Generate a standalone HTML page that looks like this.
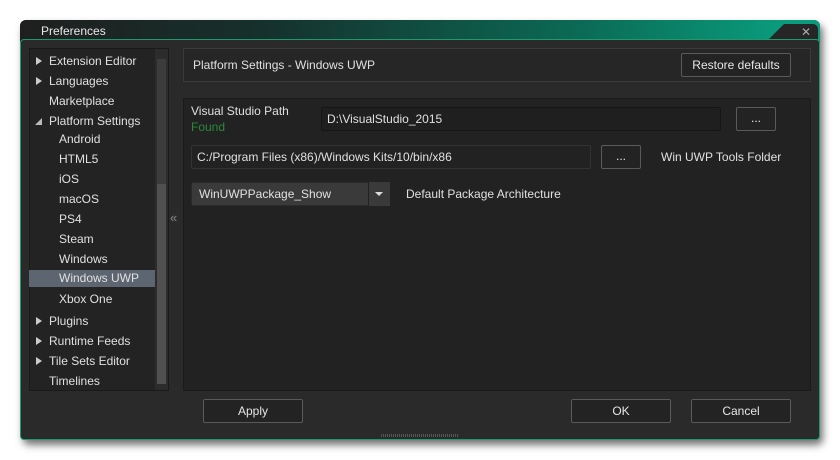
<!DOCTYPE html>
<html><head><style>
body{margin:0;width:840px;height:460px;background:#fff;position:relative;overflow:hidden;font-family:"Liberation Sans","DejaVu Sans",sans-serif;font-size:12px;color:#e0e0e0}
.abs{position:absolute;box-sizing:border-box}
.win{left:20px;top:20px;width:800px;height:420px;background:#2a2a2a;border-radius:6px;box-shadow:3px 5px 8px rgba(0,0,0,.55)}
.title{left:20px;top:20px;width:800px;height:21px;border-radius:6px 6px 0 0;background:linear-gradient(90deg,#1f1f1f 0%,#16302c 30%,#0b6a55 70%,#0a9b7c 95%)}
.body{left:20px;top:39px;width:800px;height:401px;border:1px solid #1f9a6a;border-radius:4px;background:#2a2a2a}
.panel{background:#232323;border:1px solid #1a1a1a}
.btn{border:1px solid #5a5a5a;border-radius:2px;background:#232323;text-align:center;color:#e6e6e6}
.field{background:#1f1f1f;border:1px solid #161616;border-radius:2px;padding-left:5px}
.row{position:absolute;left:0;height:20px;line-height:20px;color:#e0e0e0;font-size:12px}
.tri{position:absolute;left:7px;top:6px;width:0;height:0;border-left:6px solid #ccc;border-top:4px solid transparent;border-bottom:4px solid transparent}
</style></head><body>
<div class="abs win"></div>
<div class="abs title"></div>
<div class="abs" style="left:768px;top:24px;width:0;height:0;border-bottom:16px solid #262626;border-left:16px solid transparent"></div>
<div class="abs" style="left:784px;top:24px;width:34px;height:16px;background:#262626;border-radius:0 5px 0 0"></div>
<div class="abs" style="left:41px;top:24px;color:#e8e8e8;font-size:12px">Preferences</div>
<div class="abs" style="left:801px;top:25px;color:#aaa;font-size:12px">✕</div>
<div class="abs body"></div>

<div class="abs panel" style="left:29px;top:48px;width:140px;height:343px"></div>
<div class="abs" style="left:155px;top:49px;width:13px;height:341px;background:#2c2c2c"></div>
<div class="abs" style="left:157px;top:59px;width:9px;height:325px;background:#505050"></div>
<div class="abs" style="left:157px;top:59px;width:9px;height:125px;background:#3c3c3c"></div>
<div class="abs" style="left:29px;top:49px;width:126px;height:342px">
<div class="row" style="top:2px"><span class="tri"></span><span style="margin-left:20px">Extension Editor</span></div>
<div class="row" style="top:22px"><span class="tri"></span><span style="margin-left:20px">Languages</span></div>
<div class="row" style="top:42px"><span style="margin-left:20px">Marketplace</span></div>
<div class="row" style="top:62px"><span style="position:absolute;left:6px;top:7px;width:0;height:0;border-right:7px solid #bbb;border-top:7px solid transparent"></span><span style="margin-left:20px">Platform Settings</span></div>
<div class="row" style="top:80px"><span style="margin-left:30px">Android</span></div>
<div class="row" style="top:100px"><span style="margin-left:30px">HTML5</span></div>
<div class="row" style="top:120px"><span style="margin-left:30px">iOS</span></div>
<div class="row" style="top:140px"><span style="margin-left:30px">macOS</span></div>
<div class="row" style="top:160px"><span style="margin-left:30px">PS4</span></div>
<div class="row" style="top:180px"><span style="margin-left:30px">Steam</span></div>
<div class="row" style="top:200px"><span style="margin-left:30px">Windows</span></div>
<div class="row" style="top:221px;width:126px;height:17px;line-height:17px;background:#5d6670"><span style="margin-left:30px">Windows UWP</span></div>
<div class="row" style="top:240px"><span style="margin-left:30px">Xbox One</span></div>
<div class="row" style="top:262px"><span class="tri"></span><span style="margin-left:20px">Plugins</span></div>
<div class="row" style="top:282px"><span class="tri"></span><span style="margin-left:20px">Runtime Feeds</span></div>
<div class="row" style="top:302px"><span class="tri"></span><span style="margin-left:20px">Tile Sets Editor</span></div>
<div class="row" style="top:322px"><span style="margin-left:20px">Timelines</span></div>
</div>
<div class="abs" style="left:170px;top:210px;color:#888;font-size:13px">«</div>

<div class="abs panel" style="left:183px;top:48px;width:628px;height:34px;border-color:#3a3a3a;background:#262626"></div>
<div class="abs" style="left:193px;top:58px;font-size:12px">Platform Settings - Windows UWP</div>
<div class="abs btn" style="left:681px;top:53px;width:110px;height:24px;line-height:22px">Restore defaults</div>

<div class="abs panel" style="left:183px;top:98px;width:628px;height:293px;background:#222"></div>
<div class="abs" style="left:191px;top:104px">Visual Studio Path</div>
<div class="abs" style="left:191px;top:120px;color:#2a8a3a">Found</div>
<div class="abs field" style="left:321px;top:107px;width:400px;height:24px;line-height:22px">D:\VisualStudio_2015</div>
<div class="abs btn" style="left:736px;top:107px;width:40px;height:24px;line-height:20px">...</div>
<div class="abs field" style="left:191px;top:145px;width:400px;height:24px;line-height:22px;background:#222;border-color:#333">C:/Program Files (x86)/Windows Kits/10/bin/x86</div>
<div class="abs btn" style="left:601px;top:145px;width:40px;height:24px;line-height:20px">...</div>
<div class="abs" style="left:661px;top:150px">Win UWP Tools Folder</div>
<div class="abs" style="left:191px;top:182px;width:199px;height:24px;background:#3a3a3a;border:1px solid #2a2a2a;border-radius:2px;padding-left:7px;line-height:22px">WinUWPPackage_Show</div>
<div class="abs" style="left:368px;top:182px;width:22px;height:24px;border-left:1px solid #222;background:#3a3a3a"><span style="position:absolute;left:6px;top:10px;border-top:4px solid #ddd;border-left:4px solid transparent;border-right:4px solid transparent"></span></div>
<div class="abs" style="left:406px;top:187px">Default Package Architecture</div>

<div class="abs btn" style="left:203px;top:399px;width:100px;height:24px;line-height:22px">Apply</div>
<div class="abs btn" style="left:571px;top:399px;width:100px;height:24px;line-height:22px">OK</div>
<div class="abs btn" style="left:691px;top:399px;width:100px;height:24px;line-height:22px">Cancel</div>
<div class="abs" style="left:381px;top:434px;width:78px;height:3px;background:repeating-linear-gradient(90deg,#555 0 1px,transparent 1px 2px)"></div>
</body></html>
